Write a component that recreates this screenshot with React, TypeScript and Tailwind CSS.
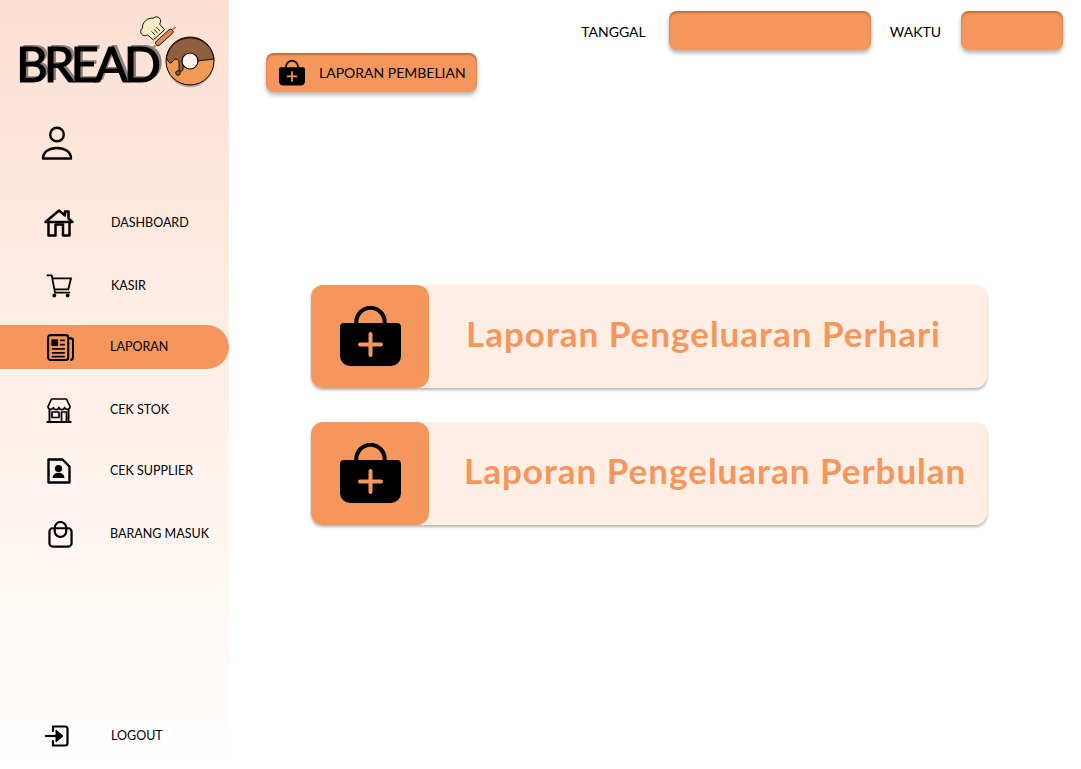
import React from 'react';

const BagPlus = ({ className, plus = '#f5975d' }: { className?: string; plus?: string }) => (
  <svg viewBox="0 0 61 61" className={className}>
    <path d="M16.300 18v-2a14.200 14.200 0 0 1 28.400 0v2" fill="none" stroke="#000" strokeWidth="4" />
    <path d="M4 17h53a4 4 0 0 1 4 4v29a10 10 0 0 1-10 10H10A10 10 0 0 1 0 50V21a4 4 0 0 1 4-4z" fill="#000" />
    <path d="M30.500 28v21M20 38.500h21" stroke={plus} strokeWidth="4" strokeLinecap="round" />
  </svg>
);

const UserIcon = () => (
  <svg viewBox="0 0 32 34" className="h-[34px] w-[32px]" fill="none" stroke="#000" strokeWidth="2.400">
    <circle cx="16" cy="8.500" r="6.800" />
    <path d="M2 32.500c0-6.500 6-10.500 14-10.500s14 4 14 10.500z" strokeLinejoin="round" />
  </svg>
);

const HomeIcon = () => (
  <svg viewBox="0 0 30 28" className="h-[28px] w-[30px]" fill="none" stroke="#000" strokeWidth="2.500" strokeLinejoin="round">
    <path d="M1.500 13 15 1.500l6 5V2.500h3.500v7l4 3.500z" />
    <path d="M4.500 13v13.500h7v-11h7.500v11h6.500V13" />
  </svg>
);

const CartIcon = () => (
  <svg viewBox="0 0 26 24" className="h-[24px] w-[26px]" fill="none" stroke="#000" strokeWidth="1.800">
    <path d="M0.700 1.300H5.700L9 18.700H24" />
    <path d="M6.300 4.300H25L22.300 15.300H8.500" />
    <circle cx="8.300" cy="21.500" r="1.900" fill="#000" stroke="none" />
    <circle cx="21.700" cy="21.500" r="1.900" fill="#000" stroke="none" />
  </svg>
);

const NewsIcon = () => (
  <svg viewBox="0 0 28 28" className="h-[27px] w-[27px]" fill="none" stroke="#000" strokeWidth="2.200" strokeLinejoin="round">
    <path d="M22 4.500h3a2 2 0 0 1 2 2V24a3 3 0 0 1-3 3" />
    <rect x="1.200" y="1.200" width="20.800" height="25.800" rx="2.500" />
    <rect x="5" y="6" width="6" height="6" fill="#000" strokeWidth="1" />
    <path d="M13.500 6.500h5M13.500 11h5M5 15.500h13.500M5 19.500h13.500M5 23.500h13.500" strokeWidth="1.800" />
  </svg>
);

const StoreIcon = () => (
  <svg viewBox="0 0 26 25" className="h-[25px] w-[26px]" fill="none" stroke="#000" strokeWidth="1.700" strokeLinejoin="round">
    <path d="M5.500 1h15l3.500 7.500a2.800 2.800 0 0 1-5.400 1 2.900 2.900 0 0 1-5.600 0 2.900 2.900 0 0 1-5.600 0 2.800 2.800 0 0 1-5.400-1z" />
    <path d="M3.500 11v12.500M22.500 11v12.500M0.500 24h25" strokeWidth="2" />
    <rect x="6" y="14" width="7" height="5.500" />
    <path d="M15.500 24V14h5v10" />
  </svg>
);

const SupplierIcon = () => (
  <svg viewBox="0 0 24 26" className="h-[26px] w-[24px]" fill="none">
    <path d="M1.500 1.500h14l7 7v16h-21z" stroke="#000" strokeWidth="2.400" strokeLinejoin="round" />
    <circle cx="11.500" cy="10.500" r="3.600" fill="#000" />
    <path d="M5.500 20c.4-3.600 3-5.200 6-5.200s5.600 1.600 6 5.200z" fill="#000" />
  </svg>
);

const BagIcon = () => (
  <svg viewBox="0 0 26 28" className="h-[27px] w-[25px]" fill="none" stroke="#000" strokeWidth="2.300">
    <rect x="1.500" y="7.500" width="23" height="19" rx="3.500" />
    <path d="M7 8V7a6 6 0 0 1 12 0v1" />
    <path d="M7 8v2.500a6 6 0 0 0 12 0V8" />
  </svg>
);

const LogoutIcon = () => (
  <svg viewBox="0 0 24 22" className="h-[22px] w-[24px]" fill="none" stroke="#000">
    <path d="M8 1.500h12a2.500 2.500 0 0 1 2.500 2.500v14a2.500 2.500 0 0 1-2.500 2.500H8V16M8 6V1.500" strokeWidth="2.200" strokeLinecap="round" />
    <path d="M0 11h12" strokeWidth="2.200" />
    <path d="M11 5l7 6-7 6z" fill="#000" strokeWidth="1" />
  </svg>
);

// hat, rolling pin and doughnut are one drawing
const LogoArt = () => (
  <svg viewBox="0 0 76 76" className="h-[76px] w-[76px] shrink-0 overflow-visible">
    <g stroke="#000" strokeWidth="0.800">
      <g transform="translate(-3 5) rotate(-42 16 14) scale(1.080)">
        <path d="M8 13c-5-1-5-8 1-8 2-4 11-4 13 0 6 0 6 7 1 8v7H9z" fill="#f2eec6" />
        <path d="M13 13v5M16 13v5M19 13v5" fill="none" strokeWidth="0.700" />
      </g>
      <g transform="translate(-3 0) rotate(-42 27 26)">
        <path d="M15 26.500h-3M39 26.500h3" stroke="#c9793f" strokeWidth="2" />
        <rect x="16" y="24" width="22" height="5" rx="2.500" fill="#dc8a4a" />
      </g>
    </g>
    <circle cx="50" cy="51.500" r="23.500" fill="#000" opacity="0.250" transform="translate(0 1.500)" />
    <circle cx="50" cy="50" r="24" fill="#ee9a55" stroke="#000" strokeWidth="1" />
    <path d="M26.500 47A24 24 0 0 1 74 48l-13 1.500c-2 0-3 1.500-4.500 1.500-5 1-9-1-12-2-1 0-1.500 1-1.500 3v6c0 3-4 3-4 0v-6c0-2-1-4-3-4-2-.5-4 4-5 4-2 0-3-2-4.500-5z" fill="#8f5f3f" stroke="#000" strokeWidth="0.900" />
    <circle cx="50" cy="50" r="8" fill="#fdf3ea" stroke="#000" strokeWidth="1.200" />
    <circle cx="38" cy="62" r="2.300" fill="#8f5f3f" stroke="#000" strokeWidth="0.900" />
  </svg>
);

const navItems = [
  { label: 'DASHBOARD', icon: <HomeIcon />, row: 'mt-0 pl-[44px]', text: 'ml-[37px]' },
  { label: 'KASIR', icon: <CartIcon />, row: 'mt-[19px] pl-[44px]', text: 'ml-[37px]' },
  { label: 'LAPORAN', icon: <NewsIcon />, row: 'mt-[17px] pl-[45px] bg-[#f5975d] rounded-r-[22px]', text: 'ml-[35px]' },
  { label: 'CEK STOK', icon: <StoreIcon />, row: 'mt-[19px] pl-[44px]', text: 'ml-[36px]' },
  { label: 'CEK SUPPLIER', icon: <SupplierIcon />, row: 'mt-[17px] pl-[44px]', text: 'ml-[36px]' },
  { label: 'BARANG MASUK', icon: <BagIcon />, row: 'mt-[19px] pl-[45px]', text: 'ml-[35px]' },
];

const reports = [
  { label: 'Laporan Pengeluaran Perhari', text: 'ml-[37px]' },
  { label: 'Laporan Pengeluaran Perbulan', text: 'ml-[35px]' },
];

const boxShadow = 'shadow-[inset_0_2px_2px_rgba(120,60,20,0.45),0_3px_4px_rgba(0,0,0,0.3)]';

export default function App() {
  return (
    <div className="flex h-[769px] w-[1081px] overflow-hidden bg-white font-['Lato','Noto_Sans',sans-serif] text-black">
      <aside className="flex w-[229px] shrink-0 flex-col bg-gradient-to-b from-[#fde0d2] to-white">
        <div className="flex h-[90px] pl-[16px] pt-[11px]">
          <span className="mt-[30px] h-[44px] w-[124px] text-[49px] font-normal leading-[44px] tracking-[-4px] [-webkit-text-stroke:1.200px_#000] [text-shadow:3px_-2px_0_#8a7f79]">
            BREAD
          </span>
          <LogoArt />
        </div>
        <div className="mt-[36px] pl-[41px]">
          <UserIcon />
        </div>
        <nav className="mt-[41px] flex flex-col">
          {navItems.map((item) => (
            <div key={item.label} className={`flex h-[44px] items-center ${item.row}`}>
              <span className="flex w-[30px] justify-center">{item.icon}</span>
              <span className={`${item.text} text-[12.500px]`}>{item.label}</span>
            </div>
          ))}
        </nav>
        <div className="mt-auto mb-[11px] flex h-[44px] items-center pl-[45px]">
          <LogoutIcon />
          <span className="ml-[42px] text-[12.500px]">LOGOUT</span>
        </div>
      </aside>

      <main className="flex min-w-0 flex-1 flex-col">
        <header className="flex items-center justify-end pr-[18px] pt-[11px]">
          <span className="pt-px text-[14px]">TANGGAL</span>
          <div className={`ml-[23px] h-[39px] w-[202px] rounded-lg bg-[#f5975d] ${boxShadow}`} />
          <span className="ml-[19px] pt-px text-[14px]">WAKTU</span>
          <div className={`ml-[20px] h-[39px] w-[102px] rounded-lg bg-[#f5975d] ${boxShadow}`} />
        </header>

        <button className={`ml-[37px] mt-[3px] flex h-[39px] w-[211px] items-center rounded-lg bg-[#f5975d] pl-[13px] ${boxShadow}`}>
          <BagPlus className="h-[26px] w-[26px]" />
          <span className="ml-[14px] text-[14px]">LAPORAN PEMBELIAN</span>
        </button>

        <section className="ml-[82px] mt-[193px] flex w-[676px] flex-col gap-[34px]">
          {reports.map((report) => (
            <div key={report.label} className="flex h-[103px] items-center rounded-xl bg-[#ffeee4] shadow-[0_2px_3px_rgba(0,0,0,0.3)]">
              <div className="flex h-full w-[118px] items-center justify-center rounded-xl bg-[#f5975d]">
                <BagPlus className="h-[61px] w-[61px]" />
              </div>
              <span className={`${report.text} mb-[7px] whitespace-nowrap text-[35px] font-bold tracking-[1px] text-[#f5975d]`}>{report.label}</span>
            </div>
          ))}
        </section>
      </main>
    </div>
  );
}
